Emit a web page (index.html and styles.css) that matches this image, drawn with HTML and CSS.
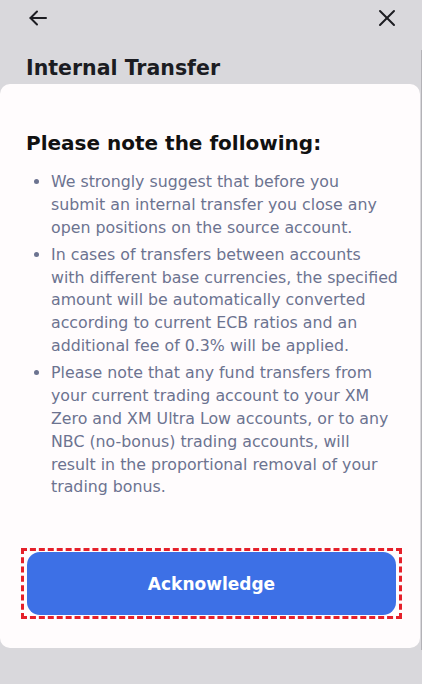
FILE: index.html
```html
<!DOCTYPE html>
<html lang="en">
<head>
    <meta charset="UTF-8">
    <meta name="viewport" content="width=device-width, initial-scale=1.0">
    <title>Internal Transfer</title>
    <link rel="stylesheet" href="styles.css">
</head>
<body>

    <!-- Top bar -->
    <div class="topbar">
        <button class="icon-btn" aria-label="Back">
            <svg width="20" height="20" viewBox="0 0 20 20" fill="none" stroke="#1d1d22" stroke-width="2" stroke-linecap="round" stroke-linejoin="round">
                <path d="M18 10H2.5"/>
                <path d="M9 3.5L2.5 10L9 16.5"/>
            </svg>
        </button>
        <button class="icon-btn" aria-label="Close">
            <svg width="18" height="18" viewBox="0 0 18 18" fill="none" stroke="#1d1d22" stroke-width="2" stroke-linecap="round">
                <path d="M2 2L16 16"/>
                <path d="M16 2L2 16"/>
            </svg>
        </button>
    </div>

    <h1 class="page-title">Internal Transfer</h1>

    <!-- Notice sheet -->
    <div class="sheet">
        <h2 class="sheet-title">Please note the following:</h2>
        <ul class="notes">
            <li>We strongly suggest that before you submit an internal transfer you close any open positions on the source account.</li>
            <li>In cases of transfers between accounts with different base currencies, the specified amount will be automatically converted according to current ECB ratios and an additional fee of 0.3% will be applied.</li>
            <li>Please note that any fund transfers from your current trading account to your XM Zero and XM Ultra Low accounts, or to any NBC (no-bonus) trading accounts, will result in the proportional removal of your trading bonus.</li>
        </ul>
        <div class="focus-ring">
            <button class="ack-btn">Acknowledge</button>
        </div>
    </div>

    <!-- scrollbar trace -->
    <div class="scroll-line"></div>

</body>
</html>
```

FILE: styles.css
```css
* {
    box-sizing: border-box;
}

body {
    margin: 0;
    background-color: #d9d8dc;
    font-family: 'DejaVu Sans', 'Open Sans', sans-serif;
    height: 684px;
    overflow: hidden;
    position: relative;
}

.topbar {
    display: flex;
    justify-content: space-between;
    align-items: center;
    height: 36px;
    padding: 0 26px 0 28px;
}

.icon-btn {
    background: none;
    border: none;
    padding: 0;
    display: flex;
    cursor: pointer;
}

.page-title {
    margin: 20px 0 0 26px;
    font-size: 20.5px;
    line-height: 24px;
    font-weight: bold;
    color: #1b1c22;
}

.sheet {
    margin-top: 4px;
    width: 420px;
    height: 564px;
    background-color: #fffcfd;
    border-radius: 10px;
    padding: 44px 22px 0 26px;
}

.sheet-title {
    margin: 0;
    font-size: 20px;
    line-height: 30px;
    font-weight: bold;
    color: #111;
}

.notes {
    margin: 13px 0 0;
    padding-left: 25px;
    color: #6c7390;
    font-size: 15.8px;
    line-height: 22.8px;
}

.notes li + li {
    margin-top: 4.5px;
}

.focus-ring {
    margin: 49px -4px 0 -5px;
    border: 3px dashed #e5202a;
    padding: 1px 3px;
}

.ack-btn {
    display: block;
    width: 100%;
    height: 63px;
    border: none;
    border-radius: 13px;
    background-color: #3d70e6;
    color: #fff;
    font-family: 'DejaVu Sans', 'Open Sans', sans-serif;
    font-size: 17px;
    font-weight: bold;
    cursor: pointer;
}

.scroll-line {
    position: absolute;
    top: 50px;
    right: 0;
    width: 1px;
    height: 600px;
    background-color: #b3b2b7;
}
```
